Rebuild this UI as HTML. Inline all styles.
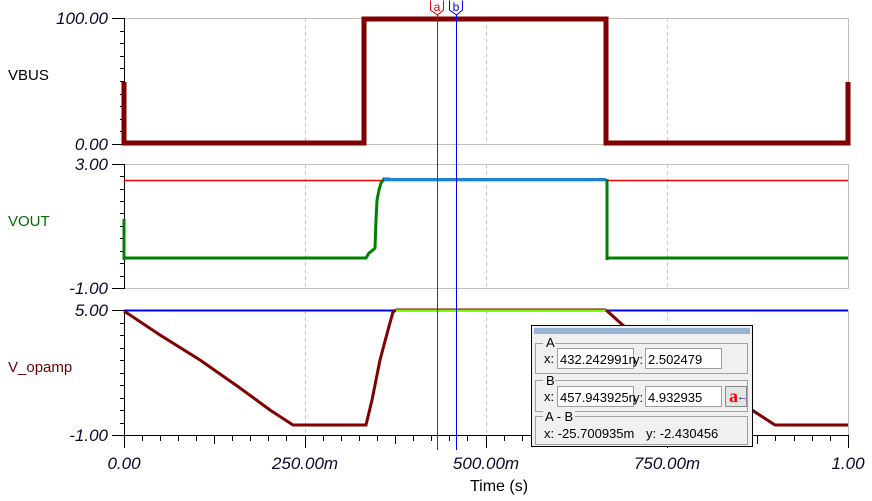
<!DOCTYPE html>
<html><head><meta charset="utf-8"><style>
html,body{margin:0;padding:0;background:#fff;width:872px;height:501px;overflow:hidden}
svg{display:block}
.lbl{font-family:"Liberation Sans",sans-serif;font-style:italic;font-size:17px;fill:#0a0a30}
.name{font-family:"Liberation Sans",sans-serif;font-size:15px}
.dlg{font-family:"Liberation Sans",sans-serif;font-size:13px;fill:#000}
</style></head><body>
<svg width="872" height="501" viewBox="0 0 872 501" xmlns="http://www.w3.org/2000/svg">
<g fill="none" stroke="#c0c0c0" stroke-width="1">
<rect x="124.5" y="18.5" width="724" height="126"/>
<rect x="124.5" y="164.5" width="724" height="124"/>
<rect x="124.5" y="310.5" width="724" height="125"/>
</g>
<g stroke="#c8c8c8" stroke-dasharray="4,3" stroke-width="1">
<line x1="305.5" y1="18" x2="305.5" y2="144"/><line x1="486.5" y1="18" x2="486.5" y2="144"/><line x1="667.5" y1="18" x2="667.5" y2="144"/>
<line x1="305.5" y1="164" x2="305.5" y2="288"/><line x1="486.5" y1="164" x2="486.5" y2="288"/><line x1="667.5" y1="164" x2="667.5" y2="288"/>
<line x1="305.5" y1="310" x2="305.5" y2="435"/><line x1="486.5" y1="310" x2="486.5" y2="435"/><line x1="667.5" y1="310" x2="667.5" y2="435"/>
</g>
<!-- axes -->
<g stroke="#000" stroke-width="1">
<line x1="124.5" y1="18" x2="124.5" y2="145"/>
<line x1="112" y1="18.5" x2="124" y2="18.5"/><line x1="112" y1="144.5" x2="124" y2="144.5"/>
<line x1="120" y1="31.5" x2="124" y2="31.5"/><line x1="120" y1="43.5" x2="124" y2="43.5"/><line x1="120" y1="56.5" x2="124" y2="56.5"/><line x1="120" y1="68.5" x2="124" y2="68.5"/><line x1="120" y1="81.5" x2="124" y2="81.5"/><line x1="120" y1="94.5" x2="124" y2="94.5"/><line x1="120" y1="106.5" x2="124" y2="106.5"/><line x1="120" y1="119.5" x2="124" y2="119.5"/><line x1="120" y1="131.5" x2="124" y2="131.5"/>
<line x1="124.5" y1="164" x2="124.5" y2="289"/>
<line x1="112" y1="164.5" x2="124" y2="164.5"/><line x1="112" y1="288.5" x2="124" y2="288.5"/>
<line x1="120" y1="176.5" x2="124" y2="176.5"/><line x1="120" y1="189.5" x2="124" y2="189.5"/><line x1="120" y1="201.5" x2="124" y2="201.5"/><line x1="120" y1="213.5" x2="124" y2="213.5"/><line x1="120" y1="226.5" x2="124" y2="226.5"/><line x1="120" y1="238.5" x2="124" y2="238.5"/><line x1="120" y1="251.5" x2="124" y2="251.5"/><line x1="120" y1="263.5" x2="124" y2="263.5"/><line x1="120" y1="276.5" x2="124" y2="276.5"/>
<line x1="124.5" y1="310" x2="124.5" y2="448"/>
<line x1="112" y1="310.5" x2="124" y2="310.5"/><line x1="112" y1="435.5" x2="849" y2="435.5"/>
<line x1="120" y1="323.5" x2="124" y2="323.5"/><line x1="120" y1="335.5" x2="124" y2="335.5"/><line x1="120" y1="348.5" x2="124" y2="348.5"/><line x1="120" y1="360.5" x2="124" y2="360.5"/><line x1="120" y1="373.5" x2="124" y2="373.5"/><line x1="120" y1="385.5" x2="124" y2="385.5"/><line x1="120" y1="398.5" x2="124" y2="398.5"/><line x1="120" y1="410.5" x2="124" y2="410.5"/><line x1="120" y1="423.5" x2="124" y2="423.5"/>
<line x1="305.5" y1="435" x2="305.5" y2="448"/><line x1="486.5" y1="435" x2="486.5" y2="448"/><line x1="667.5" y1="435" x2="667.5" y2="448"/><line x1="848.5" y1="435" x2="848.5" y2="448"/>
<line x1="142.5" y1="435" x2="142.5" y2="441"/><line x1="160.5" y1="435" x2="160.5" y2="441"/><line x1="178.5" y1="435" x2="178.5" y2="441"/><line x1="196.5" y1="435" x2="196.5" y2="441"/><line x1="214.5" y1="435" x2="214.5" y2="444"/><line x1="232.5" y1="435" x2="232.5" y2="441"/><line x1="250.5" y1="435" x2="250.5" y2="441"/><line x1="268.5" y1="435" x2="268.5" y2="441"/><line x1="286.5" y1="435" x2="286.5" y2="441"/>
<line x1="323.5" y1="435" x2="323.5" y2="441"/><line x1="341.5" y1="435" x2="341.5" y2="441"/><line x1="359.5" y1="435" x2="359.5" y2="441"/><line x1="377.5" y1="435" x2="377.5" y2="441"/><line x1="395.5" y1="435" x2="395.5" y2="444"/><line x1="413.5" y1="435" x2="413.5" y2="441"/><line x1="431.5" y1="435" x2="431.5" y2="441"/><line x1="449.5" y1="435" x2="449.5" y2="441"/><line x1="467.5" y1="435" x2="467.5" y2="441"/>
<line x1="504.5" y1="435" x2="504.5" y2="441"/><line x1="522.5" y1="435" x2="522.5" y2="441"/><line x1="576.5" y1="435" x2="576.5" y2="444"/><line x1="757.5" y1="435" x2="757.5" y2="444"/><line x1="775.5" y1="435" x2="775.5" y2="441"/><line x1="794.5" y1="435" x2="794.5" y2="441"/><line x1="812.5" y1="435" x2="812.5" y2="441"/><line x1="830.5" y1="435" x2="830.5" y2="441"/>
</g>
<!-- labels -->
<text class="lbl" x="108" y="24" text-anchor="end">100.00</text>
<text class="lbl" x="108" y="150" text-anchor="end">0.00</text>
<text class="lbl" x="108" y="170" text-anchor="end">3.00</text>
<text class="lbl" x="108" y="294" text-anchor="end">-1.00</text>
<text class="lbl" x="108" y="316" text-anchor="end">5.00</text>
<text class="lbl" x="108" y="441" text-anchor="end">-1.00</text>
<text class="lbl" x="124" y="469" text-anchor="middle">0.00</text>
<text class="lbl" x="305" y="469" text-anchor="middle">250.00m</text>
<text class="lbl" x="486" y="469" text-anchor="middle">500.00m</text>
<text class="lbl" x="667" y="469" text-anchor="middle">750.00m</text>
<text class="lbl" x="848" y="469" text-anchor="middle">1.00</text>
<text x="499" y="491" text-anchor="middle" style="font-family:'Liberation Sans',sans-serif;font-size:16px">Time (s)</text>
<text class="name" x="8" y="80" fill="#000">VBUS</text>
<text class="name" x="8" y="226" fill="#007000">VOUT</text>
<text class="name" x="8" y="372" fill="#700000">V_opamp</text>
<!-- VBUS -->
<polyline fill="none" stroke="#800000" stroke-width="5" points="124,82 124,143 364,143 364,19 606,19 606,143 848,143 848,82"/>
<!-- VOUT -->
<line x1="124" y1="180.5" x2="848" y2="180.5" stroke="#ff0000" stroke-width="1.5"/>
<polyline fill="none" stroke="#008000" stroke-width="3" points="124,219 124,260 124,258 366,258 369,253 373,250 375,248 376,220 377,200 379,190 381,183 384,179 390,179"/>
<line x1="384" y1="179.5" x2="606" y2="179.5" stroke="#1e82d2" stroke-width="3"/>
<polyline fill="none" stroke="#008000" stroke-width="3" points="607,179 607,260 607,258 848,258"/>
<!-- V_opamp -->
<line x1="124" y1="310.5" x2="848" y2="310.5" stroke="#0000ff" stroke-width="2"/>
<polyline fill="none" stroke="#800000" stroke-width="3" points="124,311 160,335 200,360 240,388 270,410 293,425 366,425 372,400 380,360 388,330 393,312 396,310"/>
<line x1="396" y1="310.5" x2="606" y2="310.5" stroke="#80ff00" stroke-width="3"/>
<line x1="396" y1="309" x2="606" y2="309" stroke="#800000" stroke-width="1"/>
<polyline fill="none" stroke="#800000" stroke-width="3" points="606,310 625,327 700,375 755,412 775,425 848,425"/>
<!-- cursors -->
<line x1="437.5" y1="12" x2="437.5" y2="450" stroke="#e00000" stroke-width="1"/>
<line x1="456.5" y1="12" x2="456.5" y2="450" stroke="#0000ff" stroke-width="1"/>
<path d="M430.5 0.5 V10 L437.5 15 L443.5 10 V0.5" fill="#fff" stroke="#e00000"/>
<text x="437" y="11" text-anchor="middle" style="font-family:'Liberation Sans',sans-serif;font-size:12px" fill="#e00000">a</text>
<path d="M449.5 0.5 V10 L456.5 15 L462.5 10 V0.5" fill="#fff" stroke="#0000ff"/>
<text x="456" y="11" text-anchor="middle" style="font-family:'Liberation Sans',sans-serif;font-size:12px" fill="#0000ff">b</text>
<!-- dialog -->
<rect x="531.5" y="325.5" width="221" height="121" fill="#f0f0f0" stroke="#000"/>
<rect x="534" y="328" width="216" height="6" fill="#98b4d4"/>
<g fill="none" stroke="#a0a0a0">
<rect x="535.5" y="343.5" width="212" height="30"/>
<rect x="535.5" y="380.5" width="212" height="31"/>
<rect x="535.5" y="416.5" width="212" height="28"/>
</g>
<rect x="543" y="337" width="12" height="10" fill="#f0f0f0"/>
<rect x="543" y="374" width="12" height="10" fill="#f0f0f0"/>
<rect x="543" y="410" width="32" height="10" fill="#f0f0f0"/>
<text class="dlg" x="546" y="347">A</text>
<text class="dlg" x="546" y="385">B</text>
<text class="dlg" x="545" y="421">A - B</text>
<g fill="#fff" stroke="#a0a0a0">
<rect x="557.5" y="348.5" width="76" height="20"/>
<rect x="645.5" y="348.5" width="76" height="20"/>
<rect x="557.5" y="386.5" width="76" height="20"/>
<rect x="645.5" y="386.5" width="76" height="20"/>
</g>
<rect x="725.5" y="386.5" width="21" height="20" fill="#e4e4e4" stroke="#888"/>
<text x="729" y="402" style="font-family:'Liberation Serif',serif;font-size:18px;font-weight:bold" fill="#ff0000">a</text>
<text x="737" y="400" style="font-family:'Liberation Sans',sans-serif;font-size:11px" fill="#000080">←</text>
<text class="dlg" x="544" y="363">x:</text>
<text class="dlg" x="560" y="364">432.242991n</text>
<text class="dlg" x="633" y="364">y:</text>
<text class="dlg" x="648" y="364">2.502479</text>
<text class="dlg" x="544" y="401">x:</text>
<text class="dlg" x="560" y="402">457.943925n</text>
<text class="dlg" x="633" y="402">y:</text>
<text class="dlg" x="648" y="402">4.932935</text>
<text class="dlg" x="544" y="438">x:   -25.700935m</text>
<text class="dlg" x="646" y="438">y: -2.430456</text>
</svg>
</body></html>
